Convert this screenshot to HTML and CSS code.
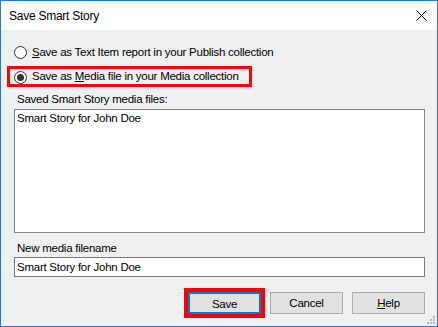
FILE: index.html
```html
<!DOCTYPE html>
<html>
<head>
<meta charset="utf-8">
<link rel="stylesheet" href="styles.css">
</head>
<body>
<div class="window">
  <div class="titlebar">
    <span class="title">Save Smart Story</span>
    <svg class="close" width="11" height="11" viewBox="0 0 11 11"><path d="M0.5 0.5 L10.5 10.5 M10.5 0.5 L0.5 10.5" stroke="#000" stroke-width="1" fill="none"/></svg>
  </div>
  <div class="content">
    <label class="radio-row"><span class="radio"></span><span class="radio-text"><u>S</u>ave as Text Item report in your Publish collection</span></label>
    <label class="radio-row highlighted"><span class="radio checked"></span><span class="radio-text">Save as <u>M</u>edia file in your Media collection</span></label>
    <div class="field-label">Saved Smart Story media files:</div>
    <div class="listbox"><div class="list-item">Smart Story for John Doe</div></div>
    <div class="field-label second">New media filename</div>
    <div class="textbox">Smart Story for John Doe</div>
    <div class="buttons">
      <button class="btn default">Save</button>
      <button class="btn">Cancel</button>
      <button class="btn"><u>H</u>elp</button>
    </div>
  </div>
  <svg class="grip" width="8" height="8" viewBox="0 0 8 8">
    <rect x="6" y="0" width="2" height="2" fill="#b9b9b9"/>
    <rect x="3" y="3" width="2" height="2" fill="#b9b9b9"/>
    <rect x="6" y="3" width="2" height="2" fill="#b9b9b9"/>
    <rect x="0" y="6" width="2" height="2" fill="#b9b9b9"/>
    <rect x="3" y="6" width="2" height="2" fill="#b9b9b9"/>
    <rect x="6" y="6" width="2" height="2" fill="#b9b9b9"/>
  </svg>
</div>
</body>
</html>
```
FILE: styles.css
```css
* { box-sizing: border-box; }
html, body { margin: 0; padding: 0; }
body {
  font-family: "Liberation Sans", Arial, sans-serif;
  font-size: 11.5px;
  letter-spacing: -0.25px;
  color: #000;
  background: #fff;
}
.window {
  position: relative;
  width: 438px;
  height: 327px;
  border: 1px solid #1c7cd5;
  background: #f0f0f0;
  display: flex;
  flex-direction: column;
}
.titlebar {
  height: 29px;
  background: #fff;
  display: flex;
  align-items: center;
  justify-content: space-between;
  padding: 1px 10px 0 8px;
}
.title { font-size: 12px; line-height: 15px; }
.close { display: block; margin-top: -1px; }
.content {
  flex: 1;
  padding: 15px 12px 0 13px;
  display: flex;
  flex-direction: column;
}
.radio-row {
  display: flex;
  align-items: center;
  height: 15px;
  line-height: 15px;
  white-space: nowrap;
}
.radio-row + .radio-row { margin-top: 9px; }
.radio {
  width: 13px;
  height: 13px;
  border: 1px solid #333;
  border-radius: 50%;
  background: #fff;
  margin-right: 5px;
  display: flex;
  align-items: center;
  justify-content: center;
  flex: none;
}
.highlighted .radio { margin-top: 1px; }
.radio.checked::after {
  content: "";
  width: 7px;
  height: 7px;
  border-radius: 50%;
  background: #333;
}
.highlighted {
  margin-left: -4px;
  padding-left: 4px;
  width: 239px;
  outline: 3px solid #ff0000;
}
.field-label {
  margin-top: 8px;
  margin-left: 3px;
  line-height: 15px;
  height: 15px;
  margin-bottom: 2px;
}
.field-label.second { margin-bottom: 1px; }
.listbox {
  height: 124px;
  background: #fff;
  border: 1px solid #828790;
  padding: 1px 2px;
}
.list-item { line-height: 15px; }
.textbox {
  height: 20px;
  background: #fff;
  border: 1px solid #7a7a7a;
  padding: 0 2px;
  line-height: 18px;
}
.buttons {
  margin-top: 15px;
  display: flex;
  justify-content: flex-end;
  gap: 9px;
}
.btn {
  width: 73px;
  height: 22px;
  font-family: inherit;
  font-size: 11.5px;
  letter-spacing: -0.25px;
  color: #000;
  background: #e1e1e1;
  border: 1px solid #adadad;
  border-radius: 0;
  padding: 0;
  line-height: 20px;
}
.btn.default {
  border: 2px solid #0078d7;
  outline: 4px solid #ff0000;
}
.grip {
  position: absolute;
  right: 2px;
  bottom: 2px;
}
```
